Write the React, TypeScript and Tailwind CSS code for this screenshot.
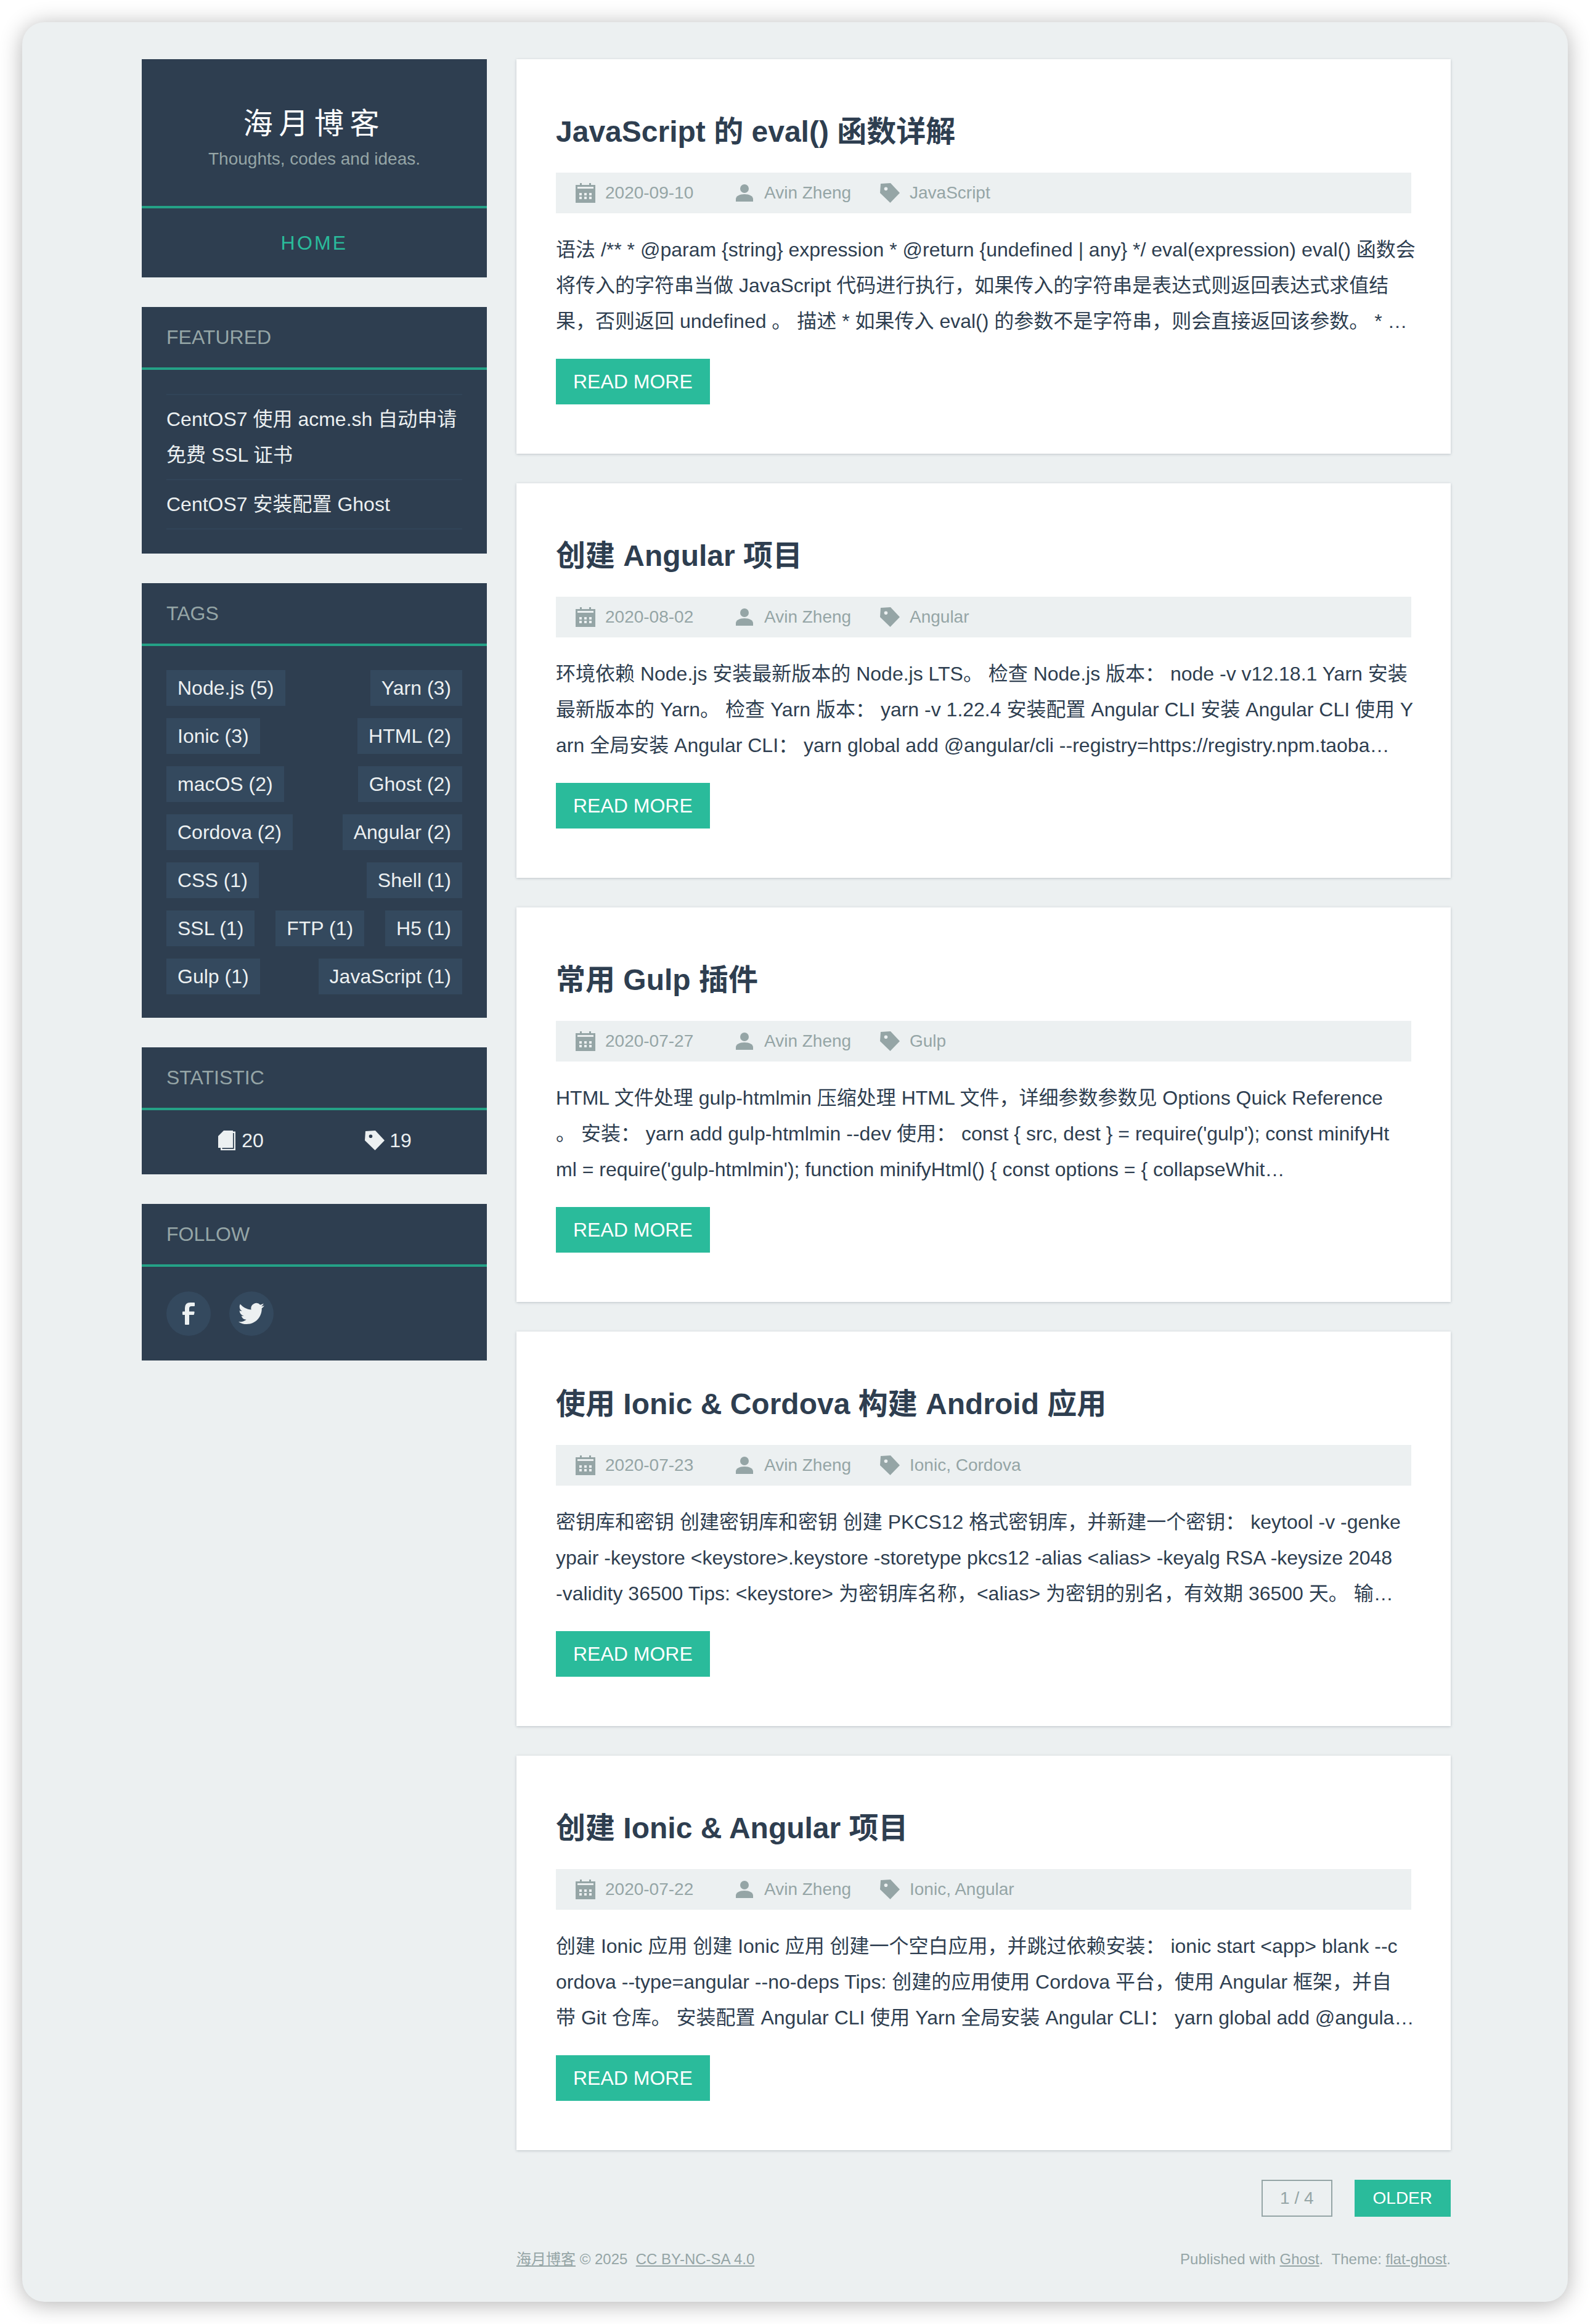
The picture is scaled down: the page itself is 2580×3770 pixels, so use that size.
import React from "react";

type Post = { title: string; date: string; tags: string; lines: [string, string, string] };

const posts: Post[] = [
  {
    title: "JavaScript 的 eval() 函数详解",
    date: "2020-09-10",
    tags: "JavaScript",
    lines: [
      "语法 /** * @param {string} expression * @return {undefined | any} */ eval(expression) eval() 函数会",
      "将传入的字符串当做 JavaScript 代码进行执行，如果传入的字符串是表达式则返回表达式求值结",
      "果，否则返回 undefined 。 描述 * 如果传入 eval() 的参数不是字符串，则会直接返回该参数。 * …",
    ],
  },
  {
    title: "创建 Angular 项目",
    date: "2020-08-02",
    tags: "Angular",
    lines: [
      "环境依赖 Node.js 安装最新版本的 Node.js LTS。 检查 Node.js 版本： node -v v12.18.1 Yarn 安装",
      "最新版本的 Yarn。 检查 Yarn 版本： yarn -v 1.22.4 安装配置 Angular CLI 安装 Angular CLI 使用 Y",
      "arn 全局安装 Angular CLI： yarn global add @angular/cli --registry=https://registry.npm.taoba…",
    ],
  },
  {
    title: "常用 Gulp 插件",
    date: "2020-07-27",
    tags: "Gulp",
    lines: [
      "HTML 文件处理 gulp-htmlmin 压缩处理 HTML 文件，详细参数参数见 Options Quick Reference",
      "。 安装： yarn add gulp-htmlmin --dev 使用： const { src, dest } = require('gulp'); const minifyHt",
      "ml = require('gulp-htmlmin'); function minifyHtml() { const options = { collapseWhit…",
    ],
  },
  {
    title: "使用 Ionic & Cordova 构建 Android 应用",
    date: "2020-07-23",
    tags: "Ionic, Cordova",
    lines: [
      "密钥库和密钥 创建密钥库和密钥 创建 PKCS12 格式密钥库，并新建一个密钥： keytool -v -genke",
      "ypair -keystore <keystore>.keystore -storetype pkcs12 -alias <alias> -keyalg RSA -keysize 2048",
      "-validity 36500 Tips: <keystore> 为密钥库名称，<alias> 为密钥的别名，有效期 36500 天。 输…",
    ],
  },
  {
    title: "创建 Ionic & Angular 项目",
    date: "2020-07-22",
    tags: "Ionic, Angular",
    lines: [
      "创建 Ionic 应用 创建 Ionic 应用 创建一个空白应用，并跳过依赖安装： ionic start <app> blank --c",
      "ordova --type=angular --no-deps Tips: 创建的应用使用 Cordova 平台，使用 Angular 框架，并自",
      "带 Git 仓库。 安装配置 Angular CLI 使用 Yarn 全局安装 Angular CLI： yarn global add @angula…",
    ],
  },
];

const tagRows = [
  ["Node.js (5)", "Yarn (3)"],
  ["Ionic (3)", "HTML (2)"],
  ["macOS (2)", "Ghost (2)"],
  ["Cordova (2)", "Angular (2)"],
  ["CSS (1)", "Shell (1)"],
  ["SSL (1)", "FTP (1)", "H5 (1)"],
  ["Gulp (1)", "JavaScript (1)"],
];

function CalendarIcon() {
  return (
    <svg viewBox="0 0 32 32" className="size-8 shrink-0" fill="currentColor" fillRule="evenodd" aria-hidden="true">
      <path d="M0 3H7V0H10V3H22V0H25V3H32V32H0ZM3 6V9H29V6ZM6 16V20H10V16ZM14 16V20H18V16ZM22 16V20H26V16ZM6 22V26H10V22ZM14 22V26H18V22ZM22 22V26H26V22Z" />
    </svg>
  );
}

function UserIcon() {
  return (
    <svg viewBox="0 0 32 32" className="size-8 shrink-0" fill="currentColor" aria-hidden="true">
      <circle cx="16" cy="9" r="7" />
      <path d="M2 30V26C2 21 8 18 16 18S30 21 30 26V30Z" />
    </svg>
  );
}

function TagIcon() {
  return (
    <svg viewBox="0 0 32 32" className="size-8 shrink-0" fill="currentColor" fillRule="evenodd" aria-hidden="true">
      <path d="M1 1L17 0L32 16L16.500 32L0 16ZM9.500 6.500A2.800 2.800 0 1 0 9.500 12.100A2.800 2.800 0 1 0 9.500 6.500Z" />
    </svg>
  );
}

function PagesIcon() {
  return (
    <svg viewBox="0 0 32 32" className="size-8 shrink-0" fill="currentColor" aria-hidden="true">
      <path d="M2 9L11 0H26V28H2Z" />
      <path d="M26 1.500H30V32H6V28H8.500V29.800H27.700V4H26Z" />
    </svg>
  );
}

function Panel({ title, children }: { title: string; children: React.ReactNode }) {
  return (
    <section className="bg-[#2e3e50] text-[#ecf0f1]">
      <h2 className="border-b-4 border-[#24a186] px-10 py-5 text-[32px] leading-[58px] text-[#95a5a6]">{title}</h2>
      {children}
    </section>
  );
}

function Sidebar() {
  return (
    <aside className="flex w-[560px] shrink-0 flex-col gap-12">
      <header className="bg-[#2e3e50] text-center">
        <div className="border-b-4 border-[#24a186] px-10 pt-[70px] pb-[54px]">
          <h1 className="text-[48px] leading-[70px] tracking-[0.2em] text-white">
            <a href="#home">海月博客</a>
          </h1>
          <p className="text-[28px] leading-[44px] text-[#95a5a6]">Thoughts, codes and ideas.</p>
        </div>
        <nav className="py-[27px] text-[32px] leading-[58px] tracking-[0.1em] text-[#2abb9b]">
          <a href="#home">HOME</a>
        </nav>
      </header>

      <Panel title="FEATURED">
        <ul className="px-10 py-[39px] text-[32px] leading-[58px]">
          <li className="border-y-2 border-[#34495e]/60 py-[10px]">
            <a href="#acme">
              CentOS7 使用 acme.sh 自动申请
              <br />
              免费 SSL 证书
            </a>
          </li>
          <li className="border-b-2 border-[#34495e]/60 py-[10px]">
            <a href="#ghost">CentOS7 安装配置 Ghost</a>
          </li>
        </ul>
      </Panel>

      <Panel title="TAGS">
        <div className="flex flex-col gap-5 px-10 pt-[39px] pb-[38px] text-[32px] leading-[58px]">
          {tagRows.map((row) => (
            <div key={row[0]} className="flex justify-between">
              {row.map((tag) => (
                <a key={tag} href="#tag" className="bg-[#34495e] px-[18px]">
                  {tag}
                </a>
              ))}
            </div>
          ))}
        </div>
      </Panel>

      <Panel title="STATISTIC">
        <div className="grid grid-cols-2 px-10 pt-5 pb-[26px] text-[32px] leading-[58px]">
          <div className="flex items-center justify-center gap-2">
            <PagesIcon />
            20
          </div>
          <div className="flex items-center justify-center gap-2">
            <TagIcon />
            19
          </div>
        </div>
      </Panel>

      <Panel title="FOLLOW">
        <div className="flex gap-[30px] px-10 py-10">
          <a href="#facebook" aria-label="Facebook" className="flex size-[72px] items-center justify-center rounded-full bg-[#34495e]">
            <svg viewBox="0 0 20 36" className="h-9 w-5" fill="currentColor" aria-hidden="true">
              <path d="M4 36V20H1Q0 20 0 19V15.500Q0 14.500 1 14.500H4V9Q4 0 12.500 0H19Q20 0 20 1V5Q20 6 19 6H14.500Q11 6 11 9.500V14.500H18.500Q19.800 14.500 19.600 15.800L19 19Q18.800 20 17.800 20H11V35Q11 36 10 36H5Q4 36 4 35Z" />
            </svg>
          </a>
          <a href="#twitter" aria-label="Twitter" className="flex size-[72px] items-center justify-center rounded-full bg-[#34495e]">
            <svg viewBox="0 0 24 24" className="size-[42px]" fill="currentColor" aria-hidden="true">
              <path d="M23.953 4.570a10 10 0 0 1-2.825.775 4.958 4.958 0 0 0 2.163-2.723c-.951.555-2.005.959-3.127 1.184a4.920 4.920 0 0 0-8.384 4.482C7.690 8.095 4.067 6.130 1.640 3.162a4.822 4.822 0 0 0-.666 2.475c0 1.710.870 3.213 2.188 4.096a4.904 4.904 0 0 1-2.228-.616v.060a4.923 4.923 0 0 0 3.946 4.827 4.996 4.996 0 0 1-2.212.085 4.936 4.936 0 0 0 4.604 3.417 9.867 9.867 0 0 1-6.102 2.105c-.390 0-.779-.023-1.170-.067a13.995 13.995 0 0 0 7.557 2.209c9.053 0 13.998-7.496 13.998-13.985 0-.210 0-.420-.015-.630A9.935 9.935 0 0 0 24 4.590z" />
            </svg>
          </a>
        </div>
      </Panel>
    </aside>
  );
}

function PostCard({ post }: { post: Post }) {
  return (
    <article className="bg-white px-16 py-20 text-[#2e3e50] shadow-[0_1px_4px_rgba(46,62,80,0.25)]">
      <h2 className="pt-[2px] text-[48px] leading-[72px] font-bold">
        <a href="#post">{post.title}</a>
      </h2>
      <div className="mt-[30px] flex h-[66px] items-center bg-[#ecf0f1] px-8 text-[28px] leading-[50px] text-[#95a5a6]">
        <span className="flex w-[258px] items-center gap-4">
          <CalendarIcon />
          <time>{post.date}</time>
        </span>
        <span className="flex w-[236px] items-center gap-4">
          <UserIcon />
          <a href="#author">Avin Zheng</a>
        </span>
        <span className="flex items-center gap-4">
          <TagIcon />
          <a href="#tag">{post.tags}</a>
        </span>
      </div>
      <p className="mt-[30px] text-[32px] leading-[58px] whitespace-nowrap">
        {post.lines[0]}
        <br />
        {post.lines[1]}
        <br />
        {post.lines[2]}
      </p>
      <a href="#post" className="mt-8 inline-block bg-[#2abb9b] px-7 align-top text-[32px] leading-[74px] text-white">
        READ MORE
      </a>
    </article>
  );
}

export default function App() {
  return (
    <div className="bg-white p-9 font-['Liberation_Sans','Noto_Sans_CJK_SC',sans-serif]" lang="zh-CN">
      <div className="rounded-[36px] bg-[#ecf0f1] pt-[60px] pr-[190px] pb-12 pl-[194px] shadow-[0_4px_36px_rgba(0,0,0,0.3)]">
        <div className="flex items-start gap-12">
          <Sidebar />
          <main className="flex min-w-0 flex-1 flex-col gap-12">
            {posts.map((post) => (
              <PostCard key={post.title} post={post} />
            ))}
            <nav className="flex justify-end gap-9 text-[28px]">
              <span className="border-2 border-[#95a5a6] px-7 leading-[56px] text-[#95a5a6]">1 / 4</span>
              <a href="#older" className="bg-[#2abb9b] px-[30px] leading-[60px] text-white">
                OLDER
              </a>
            </nav>
            <footer className="flex justify-between text-[24px] leading-[42px] text-[#95a5a6]">
              <span>
                <a href="#home" className="underline">海月博客</a> © 2025 &nbsp;
                <a href="#license" className="underline">CC BY-NC-SA 4.0</a>
              </span>
              <span>
                Published with <a href="#ghost" className="underline">Ghost</a>. &nbsp;Theme:{" "}
                <a href="#theme" className="underline">flat-ghost</a>.
              </span>
            </footer>
          </main>
        </div>
      </div>
    </div>
  );
}
